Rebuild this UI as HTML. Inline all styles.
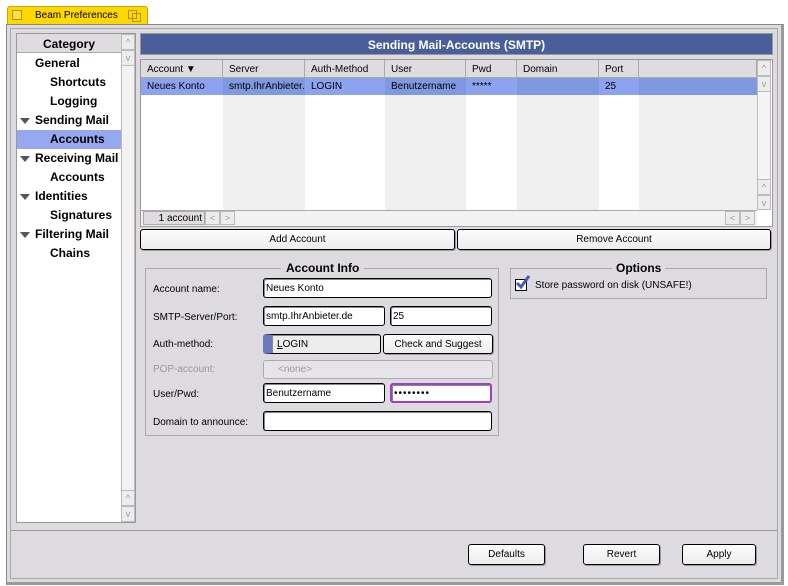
<!DOCTYPE html>
<html><head><style>
*{box-sizing:border-box;margin:0;padding:0}
body{width:788px;height:586px;background:#fff;position:relative;overflow:hidden;font-family:"Liberation Sans","DejaVu Sans",sans-serif;font-size:11px;color:#000}
.a{position:absolute}
.cat{position:absolute;font-weight:bold;font-size:12px;left:0}
.tri{position:absolute;left:20px;width:0;height:0;border-left:5px solid transparent;border-right:5px solid transparent;border-top:6px solid #555}
.tb{position:absolute;border:1px solid #000;border-radius:3px;background:#fff;padding-left:2px;font-size:10px;box-shadow:inset 1px 1px 0 #888;display:flex;align-items:center}
.btn{position:absolute;border:1px solid #000;border-radius:3px;background:linear-gradient(#fcfcfc,#ececec);font-size:10px;box-shadow:1px 1px 0 #999;display:flex;align-items:center;justify-content:center}
.lbl{position:absolute;left:153px;font-size:10px}
.col{position:absolute;top:78px;height:132px}
.hd{position:absolute;top:60px;height:18px;background:#dedcdf;border-right:1px solid #aaa;border-bottom:1px solid #aaa;padding:4px 0 0 6px;font-size:10px}
.rw{position:absolute;top:78px;height:17px;padding:3px 0 0 6px;font-size:10px}
.sb{position:absolute;width:14px;background:#ececec;border:1px solid #bbb;color:#999;font-size:9px;display:flex;align-items:center;justify-content:center}
</style></head><body>
<!-- tab -->
<div class="a" style="left:7px;top:6px;width:141px;height:19px;background:#ffd800;border:1px solid #c8a800;border-bottom:none;border-radius:3px 3px 0 0"></div>
<div class="a" style="left:12px;top:10px;width:10px;height:10px;border:1px solid #b09000;background:#ffe040"></div>
<div class="a" style="left:128px;top:10px;width:9px;height:9px;border:1px solid #b09000"></div>
<div class="a" style="left:132px;top:13px;width:9px;height:9px;border:1px solid #b09000"></div>
<div class="a" style="left:35px;top:10px;font-size:10px">Beam Preferences</div>
<!-- frame -->
<div class="a" style="left:6px;top:24px;width:778px;height:561px;background:#dddbdf;border:1px solid #888;border-right:3px solid #999;border-bottom:3px solid #999"></div>
<div class="a" style="left:10px;top:28px;width:768px;height:551px;border:1px solid #aaa"></div>
<!-- category list -->
<div class="a" style="left:16px;top:33px;width:120px;height:490px;border:1px solid #999;background:#fff"></div>
<div class="a" style="left:17px;top:34px;width:104px;height:19px;background:#dedcdf;border-bottom:1px solid #aaa;text-align:center;font-weight:bold;font-size:12px;padding-top:3px">Category</div>
<div class="a" style="left:17px;top:130px;width:104px;height:19px;background:#95a8f0"></div>
<div class="cat" style="left:35px;top:56px">General</div>
<div class="cat" style="left:50px;top:75px">Shortcuts</div>
<div class="cat" style="left:50px;top:94px">Logging</div>
<div class="cat" style="left:35px;top:113px">Sending Mail</div>
<div class="cat" style="left:50px;top:132px">Accounts</div>
<div class="cat" style="left:35px;top:151px">Receiving Mail</div>
<div class="cat" style="left:50px;top:170px">Accounts</div>
<div class="cat" style="left:35px;top:189px">Identities</div>
<div class="cat" style="left:50px;top:208px">Signatures</div>
<div class="cat" style="left:35px;top:227px">Filtering Mail</div>
<div class="cat" style="left:50px;top:246px">Chains</div>
<div class="tri" style="top:118px"></div>
<div class="tri" style="top:156px"></div>
<div class="tri" style="top:194px"></div>
<div class="tri" style="top:232px"></div>
<div class="sb" style="left:121px;top:34px;height:488px;background:#f2f2f2"></div>
<div class="sb" style="left:121px;top:34px;height:16px">^</div>
<div class="sb" style="left:121px;top:50px;height:16px">v</div>
<div class="sb" style="left:121px;top:490px;height:16px">^</div>
<div class="sb" style="left:121px;top:506px;height:16px">v</div>
<!-- table -->
<div class="a" style="left:140px;top:33px;width:633px;height:22px;background:#4a5f9a;border:1px solid #999;color:#fff;font-weight:bold;font-size:12px;text-align:center;padding-top:4px">Sending Mail-Accounts (SMTP)</div>
<div class="a" style="left:140px;top:59px;width:633px;height:168px;border:1px solid #999;background:#fff"></div>
<div class="col" style="left:223px;width:82px;background:#efefef"></div>
<div class="col" style="left:385px;width:81px;background:#efefef"></div>
<div class="col" style="left:517px;width:82px;background:#efefef"></div>
<div class="col" style="left:639px;width:118px;background:#efefef"></div>
<div class="a" style="left:141px;top:78px;width:616px;height:17px;background:#8ea3f0"></div>
<div class="a" style="left:223px;top:78px;width:82px;height:17px;background:#7f98e0"></div>
<div class="a" style="left:385px;top:78px;width:81px;height:17px;background:#7f98e0"></div>
<div class="a" style="left:517px;top:78px;width:82px;height:17px;background:#7f98e0"></div>
<div class="a" style="left:639px;top:78px;width:118px;height:17px;background:#7f98e0"></div>
<div class="hd" style="left:141px;width:82px">Account ▼</div>
<div class="hd" style="left:223px;width:82px">Server</div>
<div class="hd" style="left:305px;width:80px">Auth-Method</div>
<div class="hd" style="left:385px;width:81px">User</div>
<div class="hd" style="left:466px;width:51px">Pwd</div>
<div class="hd" style="left:517px;width:82px">Domain</div>
<div class="hd" style="left:599px;width:40px">Port</div>
<div class="hd" style="left:639px;width:118px"></div>
<div class="rw" style="left:141px">Neues Konto</div>
<div class="rw" style="left:223px">smtp.IhrAnbieter.</div>
<div class="rw" style="left:305px">LOGIN</div>
<div class="rw" style="left:385px">Benutzername</div>
<div class="rw" style="left:466px">*****</div>
<div class="rw" style="left:599px">25</div>
<div class="sb" style="left:757px;top:60px;height:150px;background:#f4f4f4"></div>
<div class="sb" style="left:757px;top:60px;height:16px">^</div>
<div class="sb" style="left:757px;top:76px;height:16px">v</div>
<div class="sb" style="left:757px;top:179px;height:16px">^</div>
<div class="sb" style="left:757px;top:195px;height:15px">v</div>
<div class="a" style="left:141px;top:210px;width:616px;height:16px;background:#f2f2f2;border-top:1px solid #aaa"></div>
<div class="a" style="left:143px;top:211px;width:62px;height:14px;background:#dedcdf;border:1px solid #aaa;font-size:10px;text-align:right;padding:1px 2px 0 0">1 account</div>
<div class="sb" style="left:205px;top:211px;height:14px;width:15px">&lt;</div>
<div class="sb" style="left:220px;top:211px;height:14px;width:15px">&gt;</div>
<div class="sb" style="left:725px;top:211px;height:14px;width:15px">&lt;</div>
<div class="sb" style="left:740px;top:211px;height:14px;width:15px">&gt;</div>
<div class="btn" style="left:140px;top:229px;width:315px;height:21px">Add Account</div>
<div class="btn" style="left:457px;top:229px;width:314px;height:21px">Remove Account</div>
<!-- account info -->
<div class="a" style="left:145px;top:268px;width:354px;height:168px;border:1px solid #aaa"></div>
<div class="a" style="left:281px;top:261px;background:#dddbdf;padding:0 5px;font-weight:bold;font-size:12px">Account Info</div>
<div class="lbl" style="top:284px">Account name:</div>
<div class="lbl" style="top:312px">SMTP-Server/Port:</div>
<div class="lbl" style="top:339px">Auth-method:</div>
<div class="lbl" style="top:364px;color:#999">POP-account:</div>
<div class="lbl" style="top:389px">User/Pwd:</div>
<div class="lbl" style="top:417px">Domain to announce:</div>
<div class="tb" style="left:263px;top:278px;width:229px;height:20px">Neues Konto</div>
<div class="tb" style="left:263px;top:306px;width:122px;height:20px">smtp.IhrAnbieter.de</div>
<div class="tb" style="left:390px;top:306px;width:102px;height:20px">25</div>
<div class="tb" style="left:263px;top:334px;width:118px;height:20px;background:#ececec;padding-left:5px;border-left:9px solid #6a78c0"><u>L</u>OGIN</div>
<div class="btn" style="left:383px;top:334px;width:110px;height:20px">Check and Suggest</div>
<div class="tb" style="left:263px;top:360px;width:230px;height:19px;background:#e6e4e8;border-color:#aaa;color:#999;padding-left:14px;box-shadow:none">&lt;none&gt;</div>
<div class="tb" style="left:263px;top:383px;width:122px;height:20px">Benutzername</div>
<div class="tb" style="left:390px;top:383px;width:102px;height:20px;border:2px solid #a040c0;letter-spacing:1px">••••••••</div>
<div class="tb" style="left:263px;top:411px;width:229px;height:20px"></div>
<!-- options -->
<div class="a" style="left:510px;top:268px;width:257px;height:31px;border:1px solid #aaa"></div>
<div class="a" style="left:612px;top:261px;background:#dddbdf;padding:0 4px;font-weight:bold;font-size:12px">Options</div>
<div class="a" style="left:515px;top:279px;width:12px;height:12px;border:1px solid #000;background:#fff"></div>
<svg class="a" style="left:515px;top:274px" width="16" height="16"><path d="M2 9 L6 13 L14 2" stroke="#4a5ab0" stroke-width="3" fill="none"/></svg>
<div class="a" style="left:535px;top:280px;font-size:10px">Store password on disk (UNSAFE!)</div>
<!-- bottom -->
<div class="a" style="left:11px;top:530px;width:766px;height:1px;background:#999"></div>
<div class="btn" style="left:468px;top:544px;width:77px;height:21px">Defaults</div>
<div class="btn" style="left:583px;top:544px;width:77px;height:21px">Revert</div>
<div class="btn" style="left:682px;top:544px;width:74px;height:21px">Apply</div>
</body></html>
